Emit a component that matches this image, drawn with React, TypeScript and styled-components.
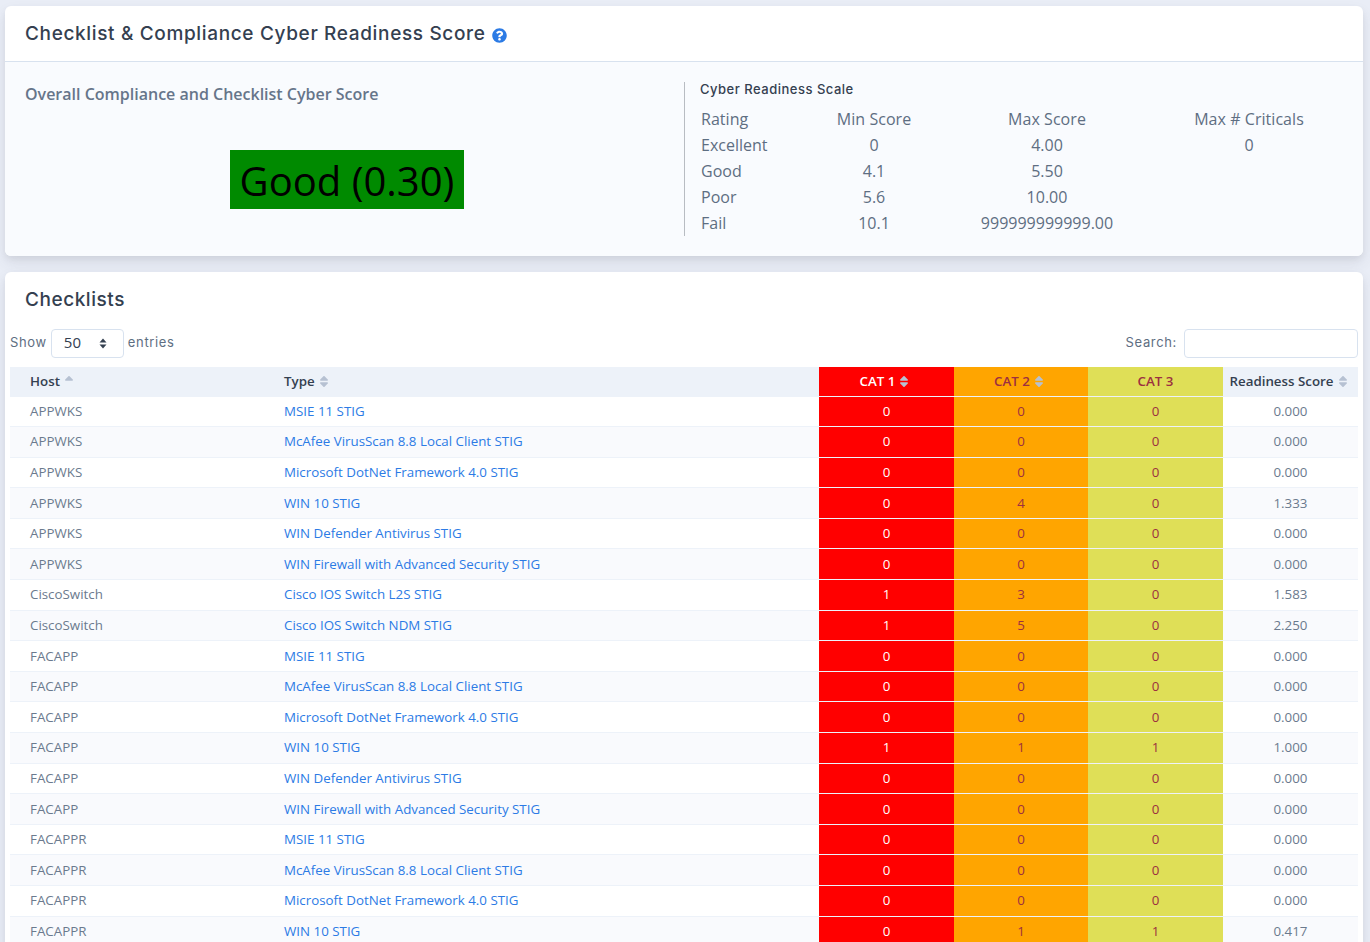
import React from 'react';
import styled, { createGlobalStyle } from 'styled-components';
import { FaQuestionCircle } from 'react-icons/fa';

const GlobalStyle = createGlobalStyle`
  html, body {
    margin: 0;
    height: 942px;
    overflow: hidden;
    background: #e9edf6;
    font-family: "Open Sans", "Noto Sans", sans-serif;
    color: #5e6e82;
  }
`;

const Page = styled.div`
  display: flex;
  flex-direction: column;
  gap: 16px;
  padding: 6px 7px 0 5px;
`;

const Card = styled.section`
  background: #fff;
  border-radius: 6px;
  box-shadow: 0 7px 14px rgba(65, 69, 88, 0.1), 0 3px 6px rgba(0, 0, 0, 0.05);
  overflow: hidden;
`;

const CardHeader = styled.header`
  display: flex;
  align-items: center;
  gap: 7px;
  height: 55px;
  padding: 0 20px;
  border-bottom: 1px solid #d8e2ef;
`;

const CardTitle = styled.h1`
  margin: 0;
  font-family: Inter, sans-serif;
  font-size: 19px;
  font-weight: 500;
  letter-spacing: 0.65px;
  color: #344050;
`;

const HelpIcon = styled(FaQuestionCircle)`
  width: 15px;
  height: 15px;
  margin-top: 3px;
  margin-left: -1px;
  color: #2c7be5;
`;

const ScoreBody = styled.div`
  display: grid;
  grid-template-columns: 644px 1fr;
  gap: 15px;
  height: 194px;
  box-sizing: border-box;
  padding: 20px 13px 20px 20px;
  background: #f9fbfe;
`;

const OverallColumn = styled.div`
  display: flex;
  flex-direction: column;
  align-items: stretch;
`;

const OverallTitle = styled.h2`
  margin: 0;
  font-size: 16px;
  line-height: 24px;
  font-weight: 600;
  color: #66758a;
`;

const ScoreBadge = styled.div`
  align-self: center;
  margin-top: 44px;
  width: 234px;
  height: 59px;
  box-sizing: border-box;
  padding-top: 1px;
  display: flex;
  align-items: center;
  justify-content: center;
  background: #008a00;
  color: #000;
  font-size: 40px;
`;

const ScaleColumn = styled.div`
  border-left: 1px solid #b8bcc2;
  height: 154px;
  padding-left: 15px;
`;

const ScaleTitle = styled.h3`
  margin: 0;
  font-family: Inter, sans-serif;
  font-size: 13px;
  line-height: 15px;
  font-weight: 500;
  letter-spacing: 0.5px;
  color: #344050;
`;

const ScaleTable = styled.table`
  width: 650px;
  margin-top: 9px;
  table-layout: fixed;
  border-collapse: collapse;
  font-size: 16px;
  color: #5e6e82;

  th, td {
    height: 26px;
    padding: 0;
    text-align: center;
    font-weight: 400;
  }

  th {
    font-weight: 500;
    letter-spacing: 0.05px;
  }

  th:first-child, td:first-child {
    text-align: left;
    padding-left: 1px;
  }
`;

const TitleBar = styled.div`
  height: 57px;
  box-sizing: border-box;
  padding: 14px 20px 0;
`;

const SectionTitle = styled.h2`
  margin: 0;
  font-family: Inter, sans-serif;
  font-size: 19px;
  line-height: 27px;
  font-weight: 500;
  letter-spacing: 0.55px;
  color: #344050;
`;

const Controls = styled.div`
  display: flex;
  align-items: center;
  justify-content: space-between;
  height: 29px;
  padding: 0 5px;
  margin-bottom: 9px;
  font-family: Inter, sans-serif;
  font-size: 13px;
  color: #5e6e82;
  letter-spacing: 0.65px;
`;

const ControlGroup = styled.label`
  display: flex;
  align-items: center;
  gap: 4px;
`;

const ControlText = styled.span`
  margin-bottom: 3px;
`;

const SelectBox = styled.div`
  display: flex;
  align-items: center;
  justify-content: space-between;
  width: 73px;
  height: 29px;
  box-sizing: border-box;
  padding: 0 16px 3px 12px;
  border: 1px solid #d8e2ef;
  border-radius: 4px;
  font-family: "Open Sans", sans-serif;
  font-size: 15px;
  letter-spacing: 0;
  color: #344050;
  background: #fff;
`;

const SearchInput = styled.input`
  width: 174px;
  height: 29px;
  box-sizing: border-box;
  margin-left: 3px;
  border: 1px solid #d8e2ef;
  border-radius: 4px;
  background: #fff;
  outline: none;
`;

const DataTable = styled.table`
  width: 1348px;
  margin: 0 5px;
  table-layout: fixed;
  border-collapse: collapse;
  font-size: 13.33px;
`;

const HeaderRow = styled.tr`
  background: #edf2f9;
`;

const catBackground: Record<number, string> = { 1: '#ff0000', 2: '#ffa500', 3: '#dfdf57' };
const catColor: Record<number, string> = { 1: '#fff', 2: '#9c3040', 3: '#9c3040' };

const Th = styled.th<{ $cat?: number; $left?: boolean }>`
  height: 29px;
  box-sizing: border-box;
  padding: ${(p) => (p.$left ? '0 0 1px 20px' : p.$cat === 3 ? '0 0 1px' : '0 5px 1px 0')};
  text-align: ${(p) => (p.$left ? 'left' : 'center')};
  font-weight: 600;
  white-space: nowrap;
  color: ${(p) => (p.$cat ? catColor[p.$cat] : '#344050')};
  background: ${(p) => (p.$cat ? catBackground[p.$cat] : 'transparent')};
`;

const BodyRow = styled.tr<{ $odd: boolean }>`
  background: ${(p) => (p.$odd ? '#f9fafd' : '#fff')};
  border-top: 1px solid #edf2f9;
`;

const Td = styled.td<{ $cat?: number; $left?: boolean }>`
  height: 30.6px;
  box-sizing: border-box;
  padding: ${(p) => (p.$left ? '0 0 1px 20px' : '0 0 1px')};
  text-align: ${(p) => (p.$left ? 'left' : 'center')};
  white-space: nowrap;
  color: ${(p) => (p.$cat ? catColor[p.$cat] : '#6b7a8e')};
  background: ${(p) => (p.$cat ? catBackground[p.$cat] : 'transparent')};
`;

const TypeLink = styled.a`
  color: #2c7be5;
  text-decoration: none;
`;

const SortSvg = styled.svg`
  display: inline-block;
  width: 8px;
  height: 13px;
  margin-left: 5px;
  vertical-align: -2px;
`;

function SortIcon({ down = '#b6c1d2' }: { down?: string }) {
  return (
    <SortSvg viewBox="0 0 10 16">
      <path d="M1 7h8c.9 0 1.3-1 .7-1.6L5.7 1.4c-.4-.4-1-.4-1.4 0L.3 5.4C-.3 6 .1 7 1 7z" fill="#b6c1d2" />
      <path d="M9 9H1c-.9 0-1.3 1-.7 1.6l4 4c.4.4 1 .4 1.4 0l4-4c.6-.6.2-1.6-.7-1.6z" fill={down} />
    </SortSvg>
  );
}

const SelectArrows = styled.svg`
  width: 8px;
  height: 11px;
  margin-top: 3px;
`;

const scaleRows = [
  ['Excellent', '0', '4.00', '0'],
  ['Good', '4.1', '5.50', ''],
  ['Poor', '5.6', '10.00', ''],
  ['Fail', '10.1', '999999999999.00', ''],
];

const rows: [string, string, number, number, number, string][] = [
  ['APPWKS', 'MSIE 11 STIG', 0, 0, 0, '0.000'],
  ['APPWKS', 'McAfee VirusScan 8.8 Local Client STIG', 0, 0, 0, '0.000'],
  ['APPWKS', 'Microsoft DotNet Framework 4.0 STIG', 0, 0, 0, '0.000'],
  ['APPWKS', 'WIN 10 STIG', 0, 4, 0, '1.333'],
  ['APPWKS', 'WIN Defender Antivirus STIG', 0, 0, 0, '0.000'],
  ['APPWKS', 'WIN Firewall with Advanced Security STIG', 0, 0, 0, '0.000'],
  ['CiscoSwitch', 'Cisco IOS Switch L2S STIG', 1, 3, 0, '1.583'],
  ['CiscoSwitch', 'Cisco IOS Switch NDM STIG', 1, 5, 0, '2.250'],
  ['FACAPP', 'MSIE 11 STIG', 0, 0, 0, '0.000'],
  ['FACAPP', 'McAfee VirusScan 8.8 Local Client STIG', 0, 0, 0, '0.000'],
  ['FACAPP', 'Microsoft DotNet Framework 4.0 STIG', 0, 0, 0, '0.000'],
  ['FACAPP', 'WIN 10 STIG', 1, 1, 1, '1.000'],
  ['FACAPP', 'WIN Defender Antivirus STIG', 0, 0, 0, '0.000'],
  ['FACAPP', 'WIN Firewall with Advanced Security STIG', 0, 0, 0, '0.000'],
  ['FACAPPR', 'MSIE 11 STIG', 0, 0, 0, '0.000'],
  ['FACAPPR', 'McAfee VirusScan 8.8 Local Client STIG', 0, 0, 0, '0.000'],
  ['FACAPPR', 'Microsoft DotNet Framework 4.0 STIG', 0, 0, 0, '0.000'],
  ['FACAPPR', 'WIN 10 STIG', 0, 1, 1, '0.417'],
];

const App: React.FC = () => (
  <>
    <GlobalStyle />
    <Page>
      <Card>
        <CardHeader>
          <CardTitle>Checklist &amp; Compliance Cyber Readiness Score</CardTitle>
          <HelpIcon />
        </CardHeader>
        <ScoreBody>
          <OverallColumn>
            <OverallTitle>Overall Compliance and Checklist Cyber Score</OverallTitle>
            <ScoreBadge>Good (0.30)</ScoreBadge>
          </OverallColumn>
          <ScaleColumn>
            <ScaleTitle>Cyber Readiness Scale</ScaleTitle>
            <ScaleTable>
              <colgroup>
                <col width="102" />
                <col width="144" />
                <col width="202" />
                <col width="202" />
              </colgroup>
              <thead>
                <tr>
                  <th>Rating</th>
                  <th>Min Score</th>
                  <th>Max Score</th>
                  <th>Max # Criticals</th>
                </tr>
              </thead>
              <tbody>
                {scaleRows.map((r) => (
                  <tr key={r[0]}>
                    {r.map((v, i) => (
                      <td key={i}>{v}</td>
                    ))}
                  </tr>
                ))}
              </tbody>
            </ScaleTable>
          </ScaleColumn>
        </ScoreBody>
      </Card>
      <Card>
        <TitleBar>
          <SectionTitle>Checklists</SectionTitle>
        </TitleBar>
        <Controls>
          <ControlGroup>
            <ControlText>Show</ControlText>
            <SelectBox>
              50
              <SelectArrows viewBox="0 0 8 11">
                <path d="M4 0.5 L7.5 4.5 H0.5 Z M4 10.5 L7.5 6.5 H0.5 Z" fill="#344050" />
              </SelectArrows>
            </SelectBox>
            <ControlText>entries</ControlText>
          </ControlGroup>
          <ControlGroup>
            <ControlText>Search:</ControlText>
            <SearchInput type="search" />
          </ControlGroup>
        </Controls>
        <DataTable>
          <colgroup>
            <col width="254" />
            <col width="555" />
            <col width="135" />
            <col width="134" />
            <col width="135" />
            <col width="135" />
          </colgroup>
          <thead>
            <HeaderRow>
              <Th $left>Host<SortIcon down="transparent" /></Th>
              <Th $left>Type<SortIcon /></Th>
              <Th $cat={1}>CAT 1<SortIcon /></Th>
              <Th $cat={2}>CAT 2<SortIcon /></Th>
              <Th $cat={3}>CAT 3</Th>
              <Th>Readiness Score<SortIcon /></Th>
            </HeaderRow>
          </thead>
          <tbody>
            {rows.map((r, i) => (
              <BodyRow key={i} $odd={i % 2 === 1}>
                <Td $left>{r[0]}</Td>
                <Td $left><TypeLink href="#">{r[1]}</TypeLink></Td>
                <Td $cat={1}>{r[2]}</Td>
                <Td $cat={2}>{r[3]}</Td>
                <Td $cat={3}>{r[4]}</Td>
                <Td>{r[5]}</Td>
              </BodyRow>
            ))}
          </tbody>
        </DataTable>
      </Card>
    </Page>
  </>
);

export default App;
